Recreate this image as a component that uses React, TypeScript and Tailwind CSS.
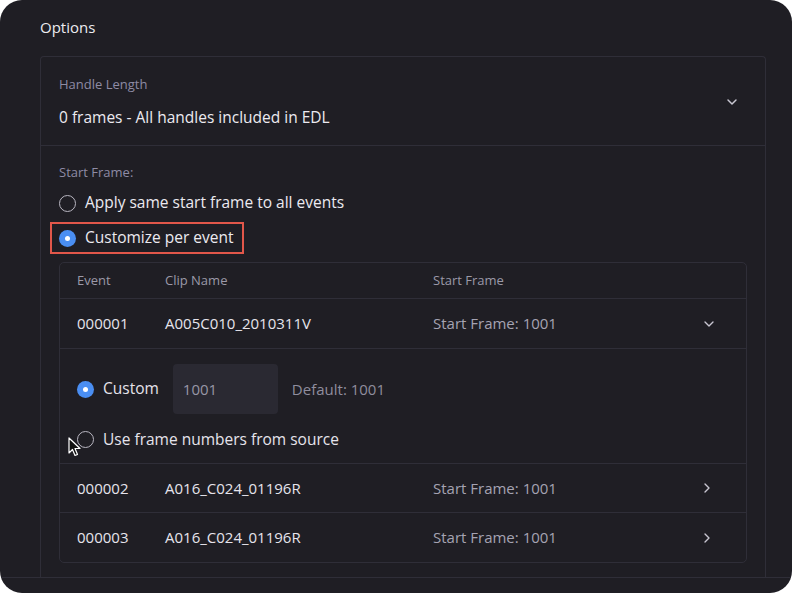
import React from 'react';
import { ChevronDown, ChevronRight } from 'lucide-react';

const rows = [
  { id: '000001', clip: 'A005C010_2010311V', open: true },
  { id: '000002', clip: 'A016_C024_01196R', open: false },
  { id: '000003', clip: 'A016_C024_01196R', open: false },
];

const Radio: React.FC<{ checked?: boolean }> = ({ checked }) =>
  checked ? (
    <span className="flex h-[17px] w-[17px] shrink-0 items-center justify-center rounded-full bg-[#4a8ef2]">
      <span className="h-[5px] w-[5px] rounded-full bg-white" />
    </span>
  ) : (
    <span className="h-[17px] w-[17px] shrink-0 rounded-full border-[1.5px] border-[#b9b7c2]" />
  );

const Cursor = () => (
  <svg width="14" height="20" viewBox="0 0 14 20" className="absolute left-[68px] top-[437px]">
    <path d="M1 1 L1 16 L4.5 12.5 L7 18.5 L9.5 17.5 L7 11.5 L12 11.5 Z" fill="#111" stroke="#fff" strokeWidth="1.2" strokeLinejoin="round" />
  </svg>
);

export default function App() {
  return (
    <div className="h-[596px] w-[796px] bg-white" style={{ fontFamily: '"Open Sans", sans-serif' }}>
      <div className="relative flex h-[593px] w-[792px] flex-col overflow-hidden rounded-[22px] bg-[#1f1e24]">
        <div className="px-[40px] pt-[16px] text-[15px] leading-[22px] text-[#ecebf0]">Options</div>

        {/* Card */}
        <div className="ml-[40px] mt-[18px] h-[521px] w-[726px] overflow-hidden">
          <div className="rounded-t-[4px] border border-b-0 border-[#2f2e38]">
            {/* Handle length */}
            <div className="flex h-[89px] items-center justify-between border-b border-[#2f2e38] pl-[18px] pr-[25px]">
              <div>
                <div className="text-[13px] leading-[18px] text-[#8e8ba5]">Handle Length</div>
                <div className="mt-[14px] text-[15.5px] leading-[20px] text-[#eceaf0]">0 frames - All handles included in EDL</div>
              </div>
              <ChevronDown size={16} strokeWidth={2.2} className="mt-[2px] text-[#c9c7d2]" />
            </div>

            {/* Start frame */}
            <div className="px-[18px] pt-[17px] pb-[16px]">
              <div className="text-[13px] leading-[18px] text-[#8e8ba5]">Start Frame:</div>
              <div className="mt-[11px] flex h-[22px] items-center gap-[9px] text-[15.5px] text-[#eceaf0]">
                <Radio />
                <span>Apply same start frame to all events</span>
              </div>
              <div className="-ml-[9px] mt-[8px] inline-flex h-[32px] items-center gap-[9px] border-2 border-[#e2574a] pl-[7px] pr-[8px] text-[15.5px] text-[#eceaf0]">
                <Radio checked />
                <span>Customize per event</span>
              </div>

              {/* Table */}
              <div className="mt-[8px] overflow-hidden rounded-[5px] border border-[#2f2e38]">
                <div className="flex h-[36px] items-center border-b border-[#2f2e38] px-[17px] text-[13px] text-[#9b99a8]">
                  <span className="w-[88px]">Event</span>
                  <span className="w-[268px]">Clip Name</span>
                  <span>Start Frame</span>
                </div>
                {rows.map((r, i) => (
                  <React.Fragment key={r.id}>
                    <div className={`flex items-center px-[17px] text-[15px] ${i < rows.length - 1 ? 'border-b border-[#2f2e38]' : ''} ${i === 0 ? 'h-[50px]' : 'h-[49px]'}`}>
                      <span className="w-[88px] text-[#e6e4ec]">{r.id}</span>
                      <span className="w-[268px] text-[#e6e4ec]">{r.clip}</span>
                      <span className="flex-1 text-[#a5a3b2]">Start Frame: 1001</span>
                      {r.open ? (
                        <ChevronDown size={16} strokeWidth={2} className="mr-[12px] text-[#c9c7d2]" />
                      ) : (
                        <ChevronRight size={16} strokeWidth={2} className="mr-[14px] text-[#c9c7d2]" />
                      )}
                    </div>
                    {r.open && (
                      <div className="h-[115px] border-b border-[#2f2e38] pl-[17px] pt-[15px]">
                        <div className="flex items-center">
                          <Radio checked />
                          <span className="ml-[9px] text-[15.5px] text-[#e6e4ec]">Custom</span>
                          <div className="ml-[14px] flex h-[50px] w-[105px] items-center rounded-[4px] bg-[#2a2932] pl-[10px] text-[15px] text-[#9896a6]">1001</div>
                          <span className="ml-[14px] text-[15px] text-[#8f8d9d]">Default: 1001</span>
                        </div>
                        <div className="mt-[14px] flex items-center">
                          <Radio />
                          <span className="ml-[9px] text-[15.5px] text-[#e6e4ec]">Use frame numbers from source</span>
                        </div>
                      </div>
                    )}
                  </React.Fragment>
                ))}
              </div>
            </div>
          </div>
        </div>

        <div className="border-t border-[#2f2e38]" />
        <Cursor />
      </div>
    </div>
  );
}
